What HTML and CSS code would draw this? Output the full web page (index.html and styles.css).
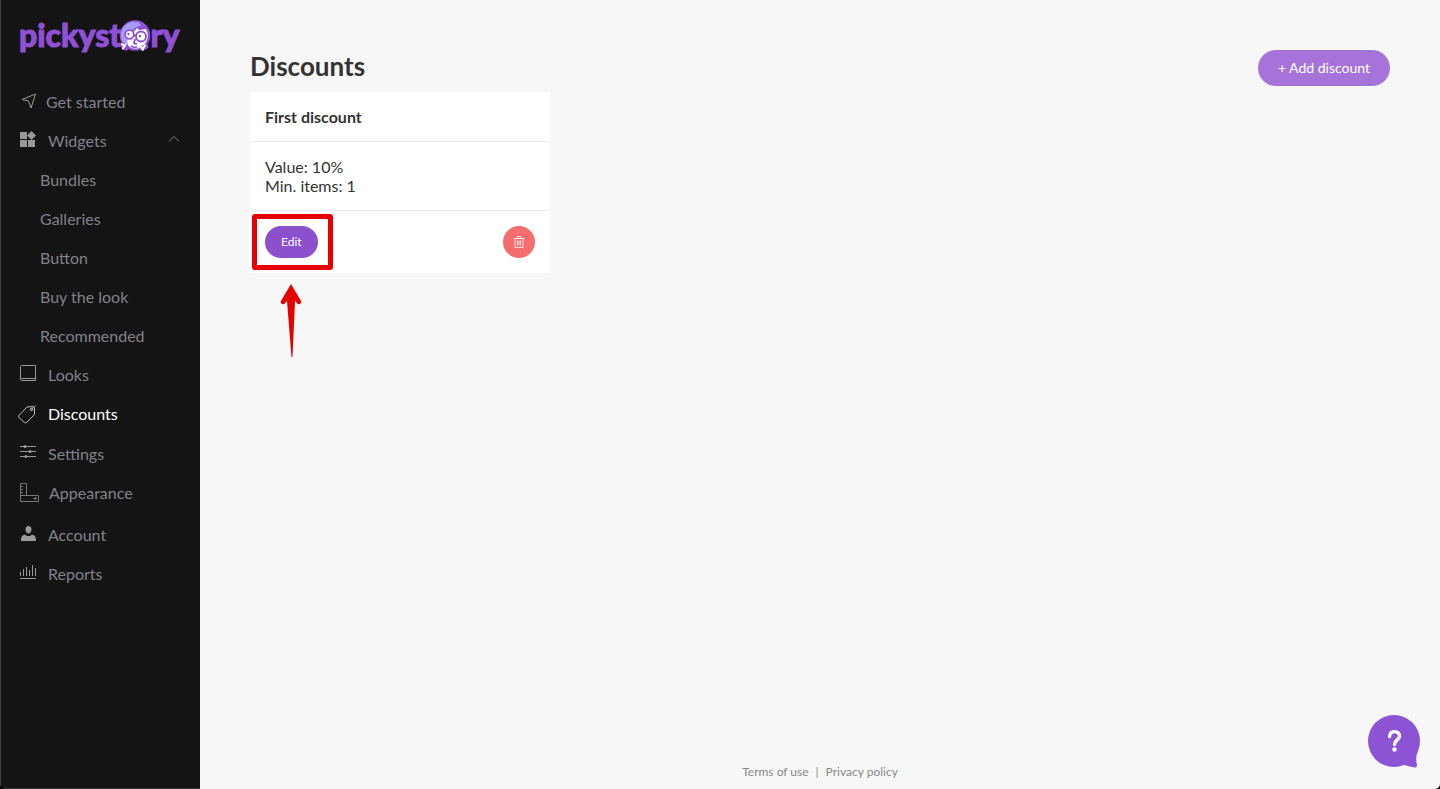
FILE: index.html
```html
<!DOCTYPE html>
<html lang="en">
<head>
<meta charset="utf-8">
<title>Discounts - pickystory</title>
<link rel="stylesheet" href="styles.css">
</head>
<body>
<div class="app">
  <aside class="sidebar">
    <a class="logo" href="#" aria-label="pickystory">
      <span>pickyst</span>
      <svg class="logo-face" viewBox="0 0 32 32" aria-hidden="true">
        <circle cx="16" cy="15.500" r="15.300" fill="#8f50d6"/>
        <path d="M19 2C8 0 1 8 2 16c0 3 1 5 2 7l6 1c-2-7 1-12 6-16 2-1 4-2 6-3Z" fill="#a59cff"/>
        <path d="M9 17c3-3 7-6 9-9l2 2c3 0 5-1 7-1 3 5 2 12-2 16-4 5-13 5-16 0-1-3-1-5 0-8Z" fill="#fff"/>
        <g fill="#fff" stroke="#8f50d6" stroke-width="1.800">
          <circle cx="10.500" cy="14.500" r="4.300"/>
          <circle cx="22" cy="16.500" r="5"/>
          <path d="M14.800 15.500H17M16 19l-1 4q1.500 1.500 3 .5M12 26q3 2 6 1" fill="none"/>
        </g>
        <circle cx="9.500" cy="14" r="1.200" fill="#8f50d6"/>
        <circle cx="21" cy="16" r="1.200" fill="#8f50d6"/>
        <g stroke="#8f50d6" stroke-width="5" stroke-linecap="round"><path d="M3.500 25l3.500 3M23 28.500l4-2"/></g>
        <g stroke="#fff" stroke-width="2.200" stroke-linecap="round"><path d="M3 24l1.500 1.500M6.500 24.500 4 28.500M22 27l2 2.500M26 25.500l-2 3"/></g>
      </svg>
      <span>ry</span>
    </a>
    <nav class="menu" aria-label="Main">
      <a class="item item-start" href="#">
        <svg class="icon" viewBox="0 0 18 18"><path d="M3 8.500 16.500 3 12 17 9.500 10Z"/></svg>
        <span>Get started</span>
      </a>
      <a class="item" href="#" aria-expanded="true">
        <svg class="icon" viewBox="0 0 18 18"><path class="solid" d="M1 2h7v7H1zM1 10h7v7H1zM9 10h7v7H9zM12.500 1l4.500 4.500-4.500 4.500L8 5.500z"/></svg>
        <span>Widgets</span>
        <svg class="chevron" viewBox="0 0 12 8"><path d="M1 6.500 6 1.500l5 5"/></svg>
      </a>
      <a class="item item-sub" href="#">Bundles</a>
      <a class="item item-sub" href="#">Galleries</a>
      <a class="item item-sub" href="#">Button</a>
      <a class="item item-sub" href="#">Buy the look</a>
      <a class="item item-sub" href="#">Recommended</a>
      <a class="item" href="#">
        <svg class="icon" viewBox="0 0 18 18"><path d="M2.500 1.500h14v15h-14l-1-1v-13zM1.500 15.500l1-1h14"/></svg>
        <span>Looks</span>
      </a>
      <a class="item item-tag item-active" href="#" aria-current="page">
        <svg class="icon icon-large" viewBox="0 0 20 20"><path d="M1.500 12 10 3l6-.5 1.500 1.500v6.500L9 19l-1.500-.5L1.500 13zM14 5.500 18.500 1.500"/><circle cx="14.500" cy="5.500" r="1.300"/></svg>
        <span>Discounts</span>
      </a>
      <a class="item" href="#">
        <svg class="icon" viewBox="0 0 18 18"><path d="M1 3.500h16M1 8.500h16M1 13.500h16"/><g class="solid"><circle cx="6" cy="3.500" r="1.500"/><circle cx="11" cy="8.500" r="1.500"/><circle cx="7" cy="13.500" r="1.500"/></g></svg>
        <span>Settings</span>
      </a>
      <a class="item item-ruler" href="#">
        <svg class="icon icon-large icon-dim" viewBox="0 0 20 20"><path d="M1.500.500h6v12h12v6h-18zM1.500 12.500h6M1.500 3.500H4M1.500 6.500H4M1.500 9.500H4M14 15.500h4M16.500 14v3"/></svg>
        <span>Appearance</span>
      </a>
      <a class="item" href="#">
        <svg class="icon" viewBox="0 0 18 18"><path class="solid" d="M9.500 2c2 0 3 1.500 3 3.500s-1.500 4-3 4-3-2-3-4S7.500 2 9.500 2ZM6 10.500c2 2 5 2 7 0 3 1 4 2 4 6.500H2c0-4.500 1-5.500 4-6.500Z"/></svg>
        <span>Account</span>
      </a>
      <a class="item" href="#">
        <svg class="icon" viewBox="0 0 18 18"><path d="M1 15.500h16M1.500 13V9M4.500 13V6M7.500 13V4M10.500 13V7M13.500 13V2M16.500 13V5"/></svg>
        <span>Reports</span>
      </a>
    </nav>
  </aside>

  <div class="content">
    <main class="page">
      <header class="page-head">
        <h1>Discounts</h1>
        <button class="btn btn-add" type="button">+ Add discount</button>
      </header>
      <article class="card">
        <h2 class="card-part">First discount</h2>
        <div class="card-part">
          <p>Value: 10%</p>
          <p>Min. items: 1</p>
        </div>
        <div class="card-part card-actions">
          <div class="marked">
            <button class="btn btn-edit" type="button">Edit</button>
            <svg class="arrow" viewBox="0 0 24 74" aria-hidden="true"><path d="M12 0 22 17q1 2-1 3-2 1-4-2l-1-1-2.500 56h-1L8 17l-1 1q-2 3-4 2t-1-3Z"/></svg>
          </div>
          <button class="btn-delete" type="button" aria-label="Delete">
            <svg viewBox="0 0 12 12"><path d="M.500 2.500h11M4.500 2V.500h3V2M2 2.500v9h8v-9M4.500 4.500v5M6 4.500v5M7.500 4.500v5"/></svg>
          </button>
        </div>
      </article>
    </main>
    <footer class="footer">
      <a href="#">Terms of use</a><span>|</span><a href="#">Privacy policy</a>
    </footer>
    <button class="help" type="button" aria-label="Help">
      <svg viewBox="0 0 52 53"><g fill="#8c54d4"><circle cx="26" cy="26" r="26"/><path d="M50 36q-3 6-1 14 0 3-2 2.500-7-1-12-3Z"/></g><path d="M21.500 21.500c0-7 11-6 10 0-.5 3.500-5 3.500-5 8" fill="none" stroke="#fff" stroke-width="3.400" stroke-linecap="round"/><circle cx="26.500" cy="34.500" r="2.200" fill="#fff"/></svg>
    </button>
  </div>
</div>
</body>
</html>
```
FILE: styles.css
```css
* { box-sizing: border-box; }

body {
  margin: 0;
  background: #000;
  color: #333;
  font: 16px/19px Lato, sans-serif;
}

h1, h2, p { margin: 0; }
a { color: inherit; text-decoration: none; }
button { border: 0; padding: 0; font-family: inherit; color: #fff; cursor: pointer; }
svg { display: block; flex: none; }

.app {
  display: flex;
  min-height: 100vh;
  overflow: hidden;
  border-radius: 0 0 5px 5px;
}

.sidebar {
  flex: 0 0 200px;
  padding: 15px 20px 20px 18px;
  background: #141414;
  border-left: 1px solid #444;
  border-bottom: 1px solid #333;
}

.logo {
  display: flex;
  align-items: center;
  height: 40px;
  color: #8f50d6;
  font-size: 32px;
  font-weight: 900;
  line-height: 40px;
  -webkit-text-stroke: 1px #8f50d6;
}
.logo-face { width: 32px; height: 32px; margin: 2px -1px 0 -2px; }

.menu { margin-top: 27px; color: #82828a; }
.item {
  display: flex;
  align-items: flex-start;
  gap: 11px;
  padding: 10px 0;
}
.item-start { gap: 9px; }
.item-sub { padding-left: 21px; }
.item-active { color: #fff; }
.item-tag { margin-left: -2px; }
.item-ruler { gap: 10px; padding-bottom: 12px; }

.icon {
  width: 18px;
  height: 18px;
  margin: -1px 0 0;
  fill: none;
  stroke: #999;
}
.icon-large { width: 20px; height: 20px; margin: 0; }
.icon-dim { stroke: #77777a; }
.item-active .icon { stroke: #bbb; }
.solid { fill: #999; stroke: none; }
.chevron { width: 12px; height: 8px; margin: 4px 0 0 auto; fill: none; stroke: #82828a; }

.content {
  position: relative;
  flex: 1;
  display: flex;
  flex-direction: column;
  background: #f7f7f7;
}
.page { flex: 1; padding: 50px 50px 20px; }
.page-head { display: flex; justify-content: space-between; margin-bottom: 6px; }
.page-head h1 { font-size: 26px; line-height: 32px; font-weight: 700; }

.btn { border-radius: 18px; }
.btn-add { height: 36px; padding: 0 20px 2px; font-size: 14px; background: #a673da; }
.btn-edit { height: 32px; padding: 0 16px 2px; font-size: 12px; background: #8c50ce; }

.card { width: 300px; background: #fff; }
.card-part { padding: 15px; }
.card-part + .card-part { border-top: 1px solid #ebebf3; }
h2.card-part { font-size: 16px; font-weight: 700; }
.card-actions { display: flex; justify-content: space-between; }

.marked { position: relative; }
.marked::after {
  content: "";
  position: absolute;
  inset: -12px -15px -12px -13px;
  border: 5px solid #e60000;
  border-radius: 3px;
  pointer-events: none;
}
.arrow { position: absolute; top: 58px; left: 14px; width: 24px; height: 74px; fill: #e60000; }

.btn-delete {
  display: grid;
  place-items: center;
  width: 32px;
  height: 32px;
  border-radius: 50%;
  background: #f46e6e;
}
.btn-delete svg { width: 12px; height: 12px; fill: none; stroke: #fff; stroke-width: 0.8; }

.footer {
  display: flex;
  justify-content: center;
  gap: 7px;
  padding-bottom: 10px;
  color: #888;
  font-size: 12px;
  line-height: 15px;
}

.help { position: absolute; right: 20px; bottom: 21px; background: none; }
.help svg { width: 52px; height: 53px; }
```
